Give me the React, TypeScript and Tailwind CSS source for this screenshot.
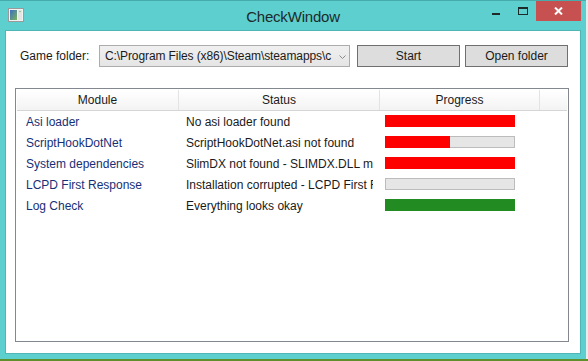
import React from "react";

const rows = [
  { module: "Asi loader", status: "No asi loader found", pct: 100, color: "#ff0000" },
  { module: "ScriptHookDotNet", status: "ScriptHookDotNet.asi not found", pct: 50, color: "#ff0000" },
  { module: "System dependencies", status: "SlimDX not found - SLIMDX.DLL missing", pct: 100, color: "#ff0000" },
  { module: "LCPD First Response", status: "Installation corrupted - LCPD First Response", pct: 0, color: "#ff0000" },
  { module: "Log Check", status: "Everything looks okay", pct: 100, color: "#228b22" },
];

function Bar({ pct, color }: { pct: number; color: string }) {
  return (
    <div className="relative w-[130px] h-[12px] bg-[#e6e6e6]">
      <div className="absolute inset-0 border border-[#bcbcbc]" />
      <div className="absolute left-0 top-0 bottom-0" style={{ width: `${pct}%`, background: color }} />
    </div>
  );
}

export default function App() {
  const font = { fontFamily: '"Liberation Sans", Arial, sans-serif' };
  return (
    <div className="w-[588px] h-[361px] bg-[#ececec] flex flex-col overflow-hidden" style={font}>
      <div className="w-[586px] h-[359px] bg-[#5dcfce] border-t border-[#48abab] flex flex-col">
        {/* title bar */}
        <div className="h-[29px] grid grid-cols-[1fr_auto_1fr]">
          <div className="pl-[8px] pt-[7px]">
            <svg width="16" height="14" viewBox="0 0 16 14">
              <defs>
                <linearGradient id="ig" x1="0" y1="0" x2="1" y2="1">
                  <stop offset="0" stopColor="#3b6fc2" />
                  <stop offset="1" stopColor="#7bb35a" />
                </linearGradient>
              </defs>
              <rect x="0.5" y="0.5" width="15" height="13" fill="#f2f2f2" stroke="#9a9a9a" />
              <rect x="2" y="2" width="7" height="10" fill="url(#ig)" />
              <rect x="10" y="2" width="4" height="10" fill="#e4e4e4" />
              <rect x="11" y="3" width="2" height="1" fill="#9bc48a" />
            </svg>
          </div>
          <div className="text-[15px] text-[#1e2a2a] leading-none pt-[8px] tracking-[-0.2px]">CheckWindow</div>
          <div className="flex justify-end items-start pr-[5px]">
            <div className="w-[27px] h-[20px] flex justify-center pt-[12px]">
              <div className="w-[8px] h-[2px] bg-[#1e2a2a]" />
            </div>
            <div className="w-[27px] h-[20px] flex justify-center pt-[6px]">
              <div className="w-[10px] h-[8px] border border-t-2 border-[#1e2a2a]" />
            </div>
            <div className="w-[45px] h-[20px] bg-[#c75050] flex items-center justify-center">
              <svg width="9" height="8" viewBox="0 0 9 8">
                <path d="M1 0.5 L8 7.5 M8 0.5 L1 7.5" stroke="#fff" strokeWidth="2" />
              </svg>
            </div>
          </div>
        </div>
        {/* client */}
        <div className="ml-[5px] w-[576px] h-[324px] border border-[#4fb5b5] bg-white flex flex-col">
          <div className="flex items-center h-[22px] mt-[14px] pl-[14px] text-[12px] text-[#1a1a1a]">
            <div className="w-[79px]">Game folder:</div>
            <div className="w-[251px] h-[22px] border border-[#acacac] bg-gradient-to-b from-[#f0f0f0] to-[#e5e5e5] flex items-center">
              <div className="w-[236px] pl-[5px] pr-[1px] overflow-hidden whitespace-nowrap tracking-[-0.1px]">
                C:\Program Files (x86)\Steam\steamapps\c
              </div>
              <svg width="7" height="4" viewBox="0 0 7 4" className="ml-[3px] mt-[1px]">
                <path d="M0.5 0.5 L3.5 3.5 L6.5 0.5" stroke="#8a8a8a" strokeWidth="1" fill="none" />
              </svg>
            </div>
            <div className="ml-[7px] w-[103px] h-[22px] border border-[#707070] bg-[#dddddd] flex items-center justify-center">Start</div>
            <div className="ml-[5px] w-[103px] h-[22px] border border-[#707070] bg-[#dddddd] flex items-center justify-center">Open folder</div>
          </div>
          <div className="ml-[9px] mt-[21px] w-[554px] h-[254px] border border-[#828790] bg-white text-[12px] p-[1px]">
            <div className="flex h-[21px] bg-gradient-to-b from-white to-[#f3f3f3] border-b border-[#d5d5d5] text-[#1a1a1a]">
              <div className="w-[162px] border-r border-[#e3e3e3] flex items-center justify-center">Module</div>
              <div className="w-[201px] border-r border-[#e3e3e3] flex items-center justify-center">Status</div>
              <div className="w-[160px] border-r border-[#e3e3e3] flex items-center justify-center">Progress</div>
              <div className="w-[26px]" />
            </div>
            {rows.map((r) => (
              <div key={r.module} className="flex h-[21px]">
                <div className="w-[162px] pl-[9px] pt-[1px] flex items-center text-[#172f78] whitespace-nowrap">{r.module}</div>
                <div className="w-[201px] pl-[7px] pr-[7px] pt-[1px] flex items-center text-[#1a1a1a]">
                  <div className="overflow-hidden whitespace-nowrap">{r.status}</div>
                </div>
                <div className="w-[160px] pl-[5px] pt-[4px]">
                  <Bar pct={r.pct} color={r.color} />
                </div>
              </div>
            ))}
          </div>
        </div>
      </div>
      <div className="h-[2px] w-full bg-[#5f8f2a]" />
    </div>
  );
}
